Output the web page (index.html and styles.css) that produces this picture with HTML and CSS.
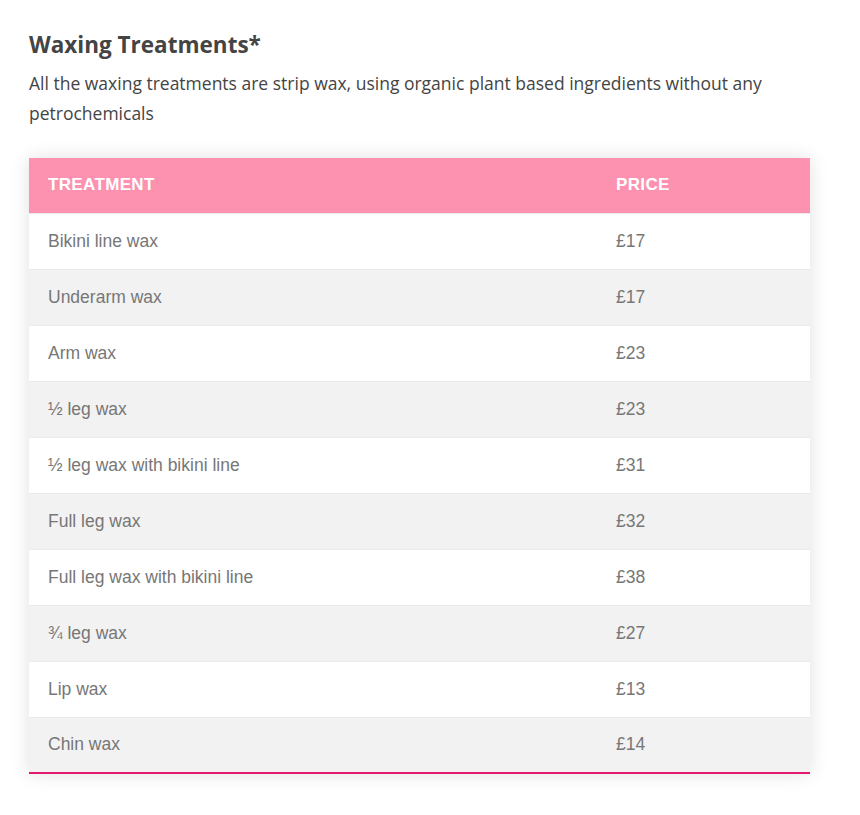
FILE: index.html
```html
<!DOCTYPE html>
<html>
<head>
<meta charset="utf-8">
<link rel="stylesheet" href="styles.css">
</head>
<body>
<div class="page">
  <h2 class="title">Waxing Treatments*</h2>
  <p class="intro">All the waxing treatments are strip wax, using organic plant based ingredients without any petrochemicals</p>
  <table class="prices">
    <thead>
      <tr><th class="col-name">Treatment</th><th>Price</th></tr>
    </thead>
    <tbody>
      <tr><td>Bikini line wax</td><td>£17</td></tr>
      <tr><td>Underarm wax</td><td>£17</td></tr>
      <tr><td>Arm wax</td><td>£23</td></tr>
      <tr><td>½ leg wax</td><td>£23</td></tr>
      <tr><td>½ leg wax with bikini line</td><td>£31</td></tr>
      <tr><td>Full leg wax</td><td>£32</td></tr>
      <tr><td>Full leg wax with bikini line</td><td>£38</td></tr>
      <tr><td>¾ leg wax</td><td>£27</td></tr>
      <tr><td>Lip wax</td><td>£13</td></tr>
      <tr><td>Chin wax</td><td>£14</td></tr>
    </tbody>
  </table>
</div>
</body>
</html>
```
FILE: styles.css
```css
html, body {
  margin: 0;
  padding: 0;
  background: #fff;
}
.page {
  padding: 30px 50px 40px 29px;
  font-family: "Open Sans", sans-serif;
  color: #444;
}
.title {
  font-size: 22.5px;
  font-weight: 700;
  line-height: 30px;
  margin: 0 0 8px 0;
  color: #444;
}
.intro {
  font-size: 17.5px;
  line-height: 30px;
  margin: 0 0 30px 0;
  color: #444;
}
.prices {
  width: 781px;
  table-layout: fixed;
  border-collapse: collapse;
  font-family: "Liberation Sans", Arial, sans-serif;
  box-shadow: 0 0 18px rgba(0, 0, 0, 0.12);
  border-bottom: 2px solid #e2196f;
}
.prices th {
  background: #fd91b0;
  color: #fff;
  text-transform: uppercase;
  font-size: 17px;
  letter-spacing: 0.35px;
  font-weight: 700;
  text-align: left;
  height: 55px;
  padding: 0 20px 0 19px;
  box-sizing: border-box;
}
.prices .col-name {
  width: 568px;
}
.prices td {
  font-size: 17.5px;
  color: #777;
  height: 56px;
  padding: 0 20px 0 19px;
  box-sizing: border-box;
  border-top: 1px solid #ebebeb;
}
.prices tbody tr:nth-child(odd) td {
  background: #fff;
}
.prices tbody tr:nth-child(even) td {
  background: #f2f2f2;
}
```
